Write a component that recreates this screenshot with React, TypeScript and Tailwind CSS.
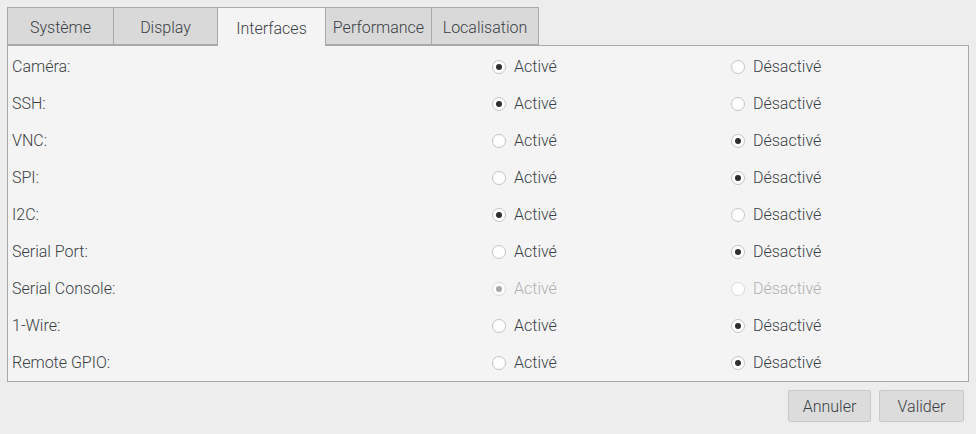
import React from "react";

type Row = { label: string; on: boolean; disabled?: boolean };

const rows: Row[] = [
  { label: "Caméra:", on: true },
  { label: "SSH:", on: true },
  { label: "VNC:", on: false },
  { label: "SPI:", on: false },
  { label: "I2C:", on: true },
  { label: "Serial Port:", on: false },
  { label: "Serial Console:", on: true, disabled: true },
  { label: "1-Wire:", on: false },
  { label: "Remote GPIO:", on: false },
];

const tabs = [
  { name: "Système", w: "w-[107px]" },
  { name: "Display", w: "w-[104px]" },
  { name: "Interfaces", w: "w-[108px]" },
  { name: "Performance", w: "w-[106px]" },
  { name: "Localisation", w: "w-[107px]" },
];

function Radio({ checked, disabled, label }: { checked: boolean; disabled?: boolean; label: string }) {
  return (
    <div className="flex items-center">
      <div
        className={
          "flex h-[14px] w-[14px] items-center justify-center rounded-full border bg-white " +
          (disabled ? "border-[#dadada] bg-[#f7f7f7]" : "border-[#c4c4c4]")
        }
      >
        {checked && (
          <div className={"h-[6px] w-[6px] rounded-full " + (disabled ? "bg-[#a8a8a8]" : "bg-[#2e2e2e]")} />
        )}
      </div>
      <span className={"ml-[8px] " + (disabled ? "text-[#b0b0b0]" : "text-[#3a3f45]")}>{label}</span>
    </div>
  );
}

export default function App() {
  return (
    <div
      className="h-[434px] w-[976px] bg-[#ededed] px-[7px] pt-[7px] text-[16px] font-light text-[#3a3f45]"
      style={{ fontFamily: "Roboto, 'Liberation Sans', sans-serif" }}
    >
      <div className="flex h-[38px]">
        {tabs.map((t, i) => {
          const active = t.name === "Interfaces";
          return (
            <div
              key={t.name}
              className={
                t.w +
                " flex items-center justify-center border-t border-r border-[#a9a9a9] pt-[3px] " +
                (i === 0 ? "border-l " : "") +
                (active ? "relative z-10 h-[39px] bg-[#f4f4f4]" : "h-[38px] border-b bg-[#d9d9d9]")
              }
            >
              {t.name}
            </div>
          );
        })}
      </div>
      <div className="h-[337px] border border-[#a9a9a9] bg-[#f4f4f4] pt-[2px] pl-[4px]">
        {rows.map((r) => (
          <div key={r.label} className="flex h-[37px] items-center">
            <div className="w-[480px]">{r.label}</div>
            <div className="w-[239px]">
              <Radio checked={r.on} disabled={r.disabled} label="Activé" />
            </div>
            <div>
              <Radio checked={!r.on} disabled={r.disabled} label="Désactivé" />
            </div>
          </div>
        ))}
      </div>
      <div className="mt-[8px] flex justify-end gap-[8px] pr-[5px]">
        <button className="h-[32px] w-[83px] rounded-[2px] border border-[#c8c8c8] bg-[#dcdcdc] pt-[1px] text-[#3a3f45]">
          Annuler
        </button>
        <button className="h-[32px] w-[85px] rounded-[2px] border border-[#c8c8c8] bg-[#dcdcdc] pt-[1px] text-[#3a3f45]">
          Valider
        </button>
      </div>
    </div>
  );
}
